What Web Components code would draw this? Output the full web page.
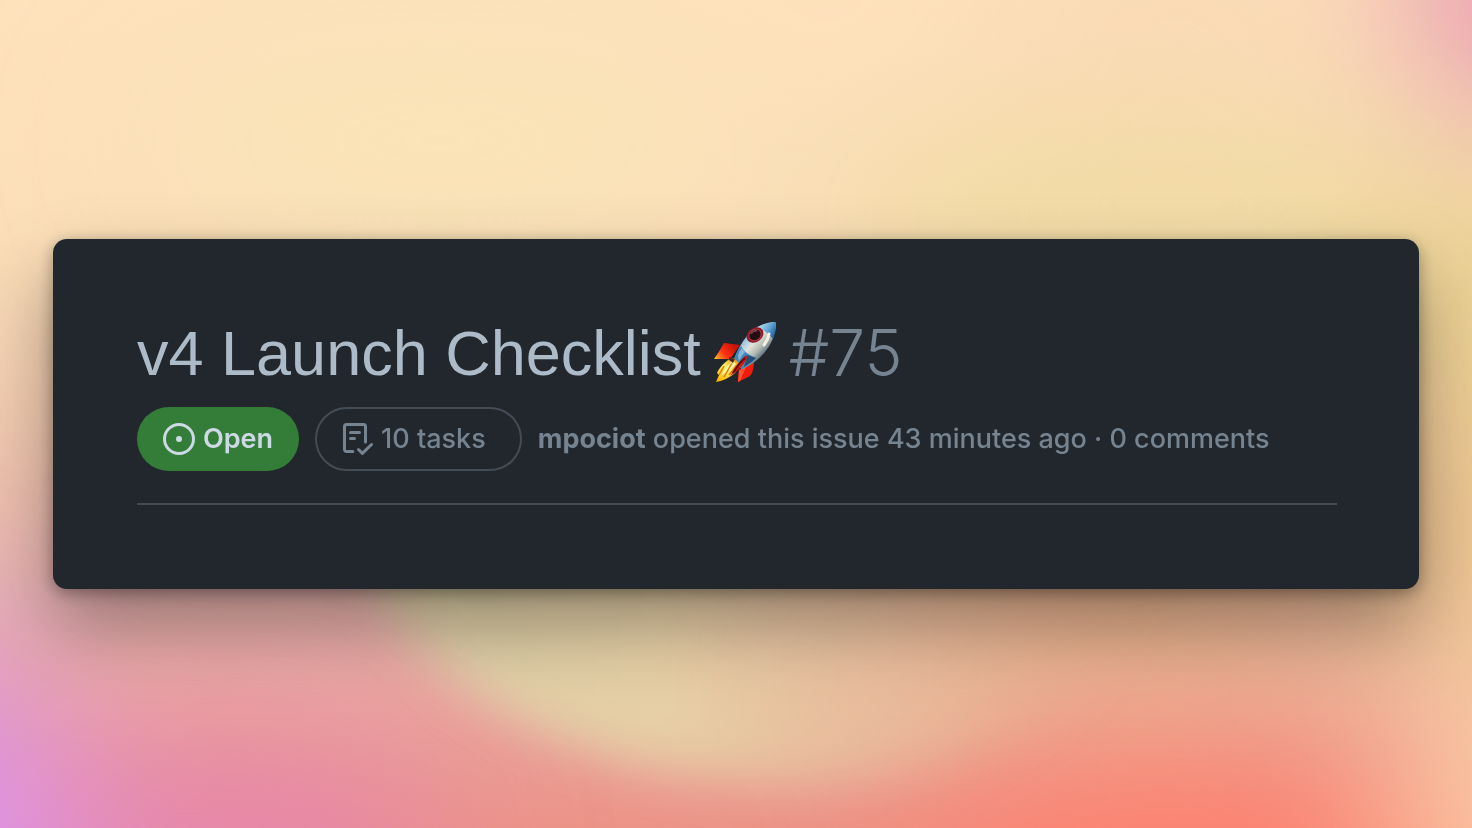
<!DOCTYPE html>
<html lang="en">
<head>
<meta charset="utf-8">
<meta name="viewport" content="width=device-width, initial-scale=1">
<title>v4 Launch Checklist</title>
<style>
    body {
        margin: 0;
        font-family: Inter, "Liberation Sans", sans-serif;
        color: #768390;
    }
</style>
</head>
<body>
<gradient-stage>
    <issue-card>
        <issue-title slot="title" number="#75">v4 Launch Checklist</issue-title>
        <state-badge slot="meta">Open</state-badge>
        <task-counter slot="meta">10 tasks</task-counter>
        <issue-byline slot="meta" author="mpociot">opened this issue 43 minutes ago · 0 comments</issue-byline>
    </issue-card>
</gradient-stage>

<script>
// Full window backdrop, the card goes in the slot
class GradientStage extends HTMLElement {
    constructor() {
        super();
        this.attachShadow({ mode: 'open' });

        this.shadowRoot.innerHTML = `
            <style>
                :host {
                    display: grid;
                    align-items: center;
                    position: relative;
                    min-height: 100vh;
                    box-sizing: border-box;
                    padding: 32px 53px;
                    overflow: hidden;
                }
                .backdrop {
                    position: absolute;
                    inset: 0;
                    width: 100%;
                    height: 100%;
                }
                ::slotted(*) {
                    position: relative;
                }
            </style>
            <svg class="backdrop" viewBox="0 0 1472 828" preserveAspectRatio="none" aria-hidden="true">
                <defs>
                    <linearGradient id="base" x1="0" y1="0" x2="0" y2="1">
                        <stop offset="0" stop-color="#fde2bd"/>
                        <stop offset=".28" stop-color="#fbdfb9"/>
                        <stop offset=".5" stop-color="#f2cbb0"/>
                        <stop offset=".72" stop-color="#e8b3ae"/>
                        <stop offset="1" stop-color="#ec9488"/>
                    </linearGradient>
                    <linearGradient id="pale" x1="0" y1="0" x2="1" y2="0">
                        <stop offset="0" stop-color="#d9cfa6"/>
                        <stop offset=".4" stop-color="#e6cfa6"/>
                        <stop offset=".7" stop-color="#e8be9c" stop-opacity=".7"/>
                        <stop offset="1" stop-color="#eaa98a" stop-opacity="0"/>
                    </linearGradient>
                    <filter id="b24" x="-50%" y="-50%" width="200%" height="200%"><feGaussianBlur stdDeviation="24"/></filter>
                    <filter id="b80" x="-100%" y="-100%" width="300%" height="300%"><feGaussianBlur stdDeviation="80"/></filter>
                </defs>
                <rect width="1472" height="828" fill="url(#base)"/>
                <g filter="url(#b80)">
                    <ellipse cx="440" cy="140" rx="300" ry="90" fill="#fae5b6" opacity=".9"/>
                    <ellipse cx="1160" cy="220" rx="330" ry="110" fill="#eed99f" opacity=".85"/>
                    <ellipse cx="1500" cy="320" rx="130" ry="140" fill="#e9cf8c"/>
                    <ellipse cx="1180" cy="0" rx="200" ry="80" fill="#fad6b4" opacity=".8"/>
                    <ellipse cx="1530" cy="-10" rx="130" ry="130" fill="#e795b0"/>
                    <ellipse cx="1100" cy="580" rx="320" ry="110" fill="#e6b488"/>
                    <ellipse cx="1510" cy="540" rx="120" ry="180" fill="#ecc88e"/>
                    <ellipse cx="1180" cy="890" rx="270" ry="130" fill="#ff7f6e"/>
                    <ellipse cx="1540" cy="800" rx="130" ry="150" fill="#fccfa8"/>
                    <ellipse cx="230" cy="860" rx="210" ry="110" fill="#e585b0"/>
                    <ellipse cx="-60" cy="860" rx="130" ry="220" fill="#dc94ec"/>
                </g>
                <path d="M325 440 H1180 C1180 690 960 792 760 782 C590 772 365 700 325 440Z" fill="url(#pale)" filter="url(#b24)"/>
            </svg>
            <slot></slot>
        `;
    }
}

class IssueCard extends HTMLElement {
    constructor() {
        super();
        this.attachShadow({ mode: 'open' });

        this.shadowRoot.innerHTML = `
            <style>
                :host {
                    display: block;
                    padding: 74px 82px 84px 84px;
                    border-radius: 14px;
                    background: #22272e;
                    box-shadow: 0 4px 16px rgba(0, 0, 0, .35), 0 36px 72px rgba(0, 0, 0, .35);
                }
                header {
                    display: flex;
                    flex-direction: column;
                    gap: 14px;
                    padding-bottom: 32px;
                    border-bottom: 2px solid #444c56;
                }
                .meta {
                    display: flex;
                    flex-wrap: wrap;
                    align-items: center;
                    gap: 16px;
                    font-size: 27px;
                    font-weight: 500;
                    line-height: 40px;
                }
            </style>
            <header>
                <slot name="title"></slot>
                <div class="meta"><slot name="meta"></slot></div>
            </header>
        `;
    }
}

class IssueTitle extends HTMLElement {
    constructor() {
        super();
        this.attachShadow({ mode: 'open' });

        this.shadowRoot.innerHTML = `
            <style>
                :host {
                    display: block;
                }
                h1 {
                    display: flex;
                    flex-wrap: wrap;
                    align-items: center;
                    gap: 12px;
                    margin: 0;
                    font-size: 64px;
                    line-height: 80px;
                    font-weight: 400;
                    color: #adbac7;
                }
                .text {
                    font-family: "Liberation Sans", Arial, sans-serif;
                    font-size: 63px;
                }
                svg {
                    width: 64px;
                    height: 64px;
                }
                .number {
                    font-weight: 300;
                    color: #768390;
                }
            </style>
            <h1>
                <span class="text"><slot></slot></span>
                <svg viewBox="0 0 64 64" role="img" aria-label="rocket">
                    <defs>
                        <linearGradient id="body" x1="22" y1="18" x2="46" y2="40" gradientUnits="userSpaceOnUse">
                            <stop offset="0" stop-color="#2f6fa6"/>
                            <stop offset=".22" stop-color="#8fbfdf"/>
                            <stop offset=".5" stop-color="#dfe3dc"/>
                            <stop offset=".75" stop-color="#b4b9b2"/>
                            <stop offset="1" stop-color="#4d6878"/>
                        </linearGradient>
                        <linearGradient id="nose" x1="46" y1="4" x2="62" y2="14" gradientUnits="userSpaceOnUse">
                            <stop offset="0" stop-color="#b8dcf2"/>
                            <stop offset=".5" stop-color="#67a9d8"/>
                            <stop offset="1" stop-color="#1d5f9c"/>
                        </linearGradient>
                        <linearGradient id="fin" x1="20" y1="24" x2="3" y2="38" gradientUnits="userSpaceOnUse">
                            <stop offset="0" stop-color="#c91408"/>
                            <stop offset=".55" stop-color="#ff3210"/>
                            <stop offset="1" stop-color="#ffb32c"/>
                        </linearGradient>
                        <linearGradient id="flame" x1="20" y1="38" x2="6" y2="60" gradientUnits="userSpaceOnUse">
                            <stop offset="0" stop-color="#e8a020"/>
                            <stop offset=".4" stop-color="#fff06a"/>
                            <stop offset="1" stop-color="#ffb400"/>
                        </linearGradient>
                    </defs>
                    <path d="M11 22 27 24 17 38 1 38Q6 31 11 22Z" fill="url(#fin)"/>
                    <path d="M40 40 41 43Q40 52 37 55L25 61 26 49Z" fill="#f01c0c"/>
                    <path d="M26 49 33 46 27 60 25 61Z" fill="#ff5130"/>
                    <path d="M61 1Q49 2 40 9 29 18 22 36L20 41 29 48Q42 43 52 31 62 19 63 3 63 1 61 1Z" fill="url(#body)"/>
                    <path d="M61 1Q51 2 43 7 52 8 60 18 63 11 63 3 63 1 61 1Z" fill="url(#nose)"/>
                    <path d="M22 36Q24 29 28 25 31 32 43 37 37 44 29 48L20 41Z" fill="#4387b9"/>
                    <path d="M25 35Q26 30 29 27L32 31Q28 35 26 40Z" fill="#83b8dc"/>
                    <path d="M34 34 43 37Q38 42 31 46Z" fill="#244f77"/>
                    <path d="M15 39Q20 35 23 39L27 43 22 52Q14 59 3 61L6 54 4 52Q7 45 15 39Z" fill="url(#flame)"/>
                    <path d="M20 39Q13 46 8 54 16 51 23 43Z" fill="#fff7a5"/>
                    <path d="M19 42 11 56M24 44 16 54M11 45 6 54" stroke="#df7a08" stroke-width="1.5" fill="none"/>
                    <path d="M16 36 22 38 20 42 16 39Z" fill="#4b2820"/>
                    <path d="M33 34Q27 39 17 55 29 48 34 37Z" fill="#d5170e"/>
                    <path d="M32 37Q25 43 20 52" stroke="#6d0b0b" stroke-width="2" fill="none"/>
                    <ellipse cx="42" cy="14" rx="9" ry="7" transform="rotate(-35 42 14)" fill="#8f1420"/>
                    <ellipse cx="42" cy="14" rx="7" ry="6" transform="rotate(-35 42 14)" fill="#a8404c"/>
                    <ellipse cx="42" cy="14" rx="6" ry="5" transform="rotate(-35 42 14)" fill="#260c12"/>
                    <path d="M38 13Q40 9 44 10" stroke="#7c4750" stroke-width="1.5" fill="none"/>
                    <path d="M51 24Q55 19 56 13" stroke="#f3f0e5" stroke-width="3" stroke-linecap="round" fill="none"/>
                </svg>
                <span class="number"></span>
            </h1>
        `;
    }

    connectedCallback() {
        this.shadowRoot.querySelector('.number').textContent = this.getAttribute('number');
    }
}

class StateBadge extends HTMLElement {
    constructor() {
        super();
        this.attachShadow({ mode: 'open' });

        this.shadowRoot.innerHTML = `
            <style>
                :host {
                    display: flex;
                    align-items: center;
                    gap: 8px;
                    box-sizing: border-box;
                    height: 64px;
                    padding: 0 26px;
                    border-radius: 32px;
                    background: #347d39;
                    color: #cdd9e5;
                    font-weight: 600;
                }
                svg {
                    width: 32px;
                    height: 32px;
                    fill: currentColor;
                }
            </style>
            <svg viewBox="0 0 16 16" aria-hidden="true">
                <path d="M8 9.5a1.5 1.5 0 100-3 1.5 1.5 0 000 3z"/>
                <path fill-rule="evenodd" d="M8 0a8 8 0 100 16A8 8 0 008 0zM1.5 8a6.5 6.5 0 1113 0 6.5 6.5 0 01-13 0z"/>
            </svg>
            <span><slot></slot></span>
        `;
    }
}

class TaskCounter extends HTMLElement {
    constructor() {
        super();
        this.attachShadow({ mode: 'open' });

        this.shadowRoot.innerHTML = `
            <style>
                :host {
                    display: flex;
                    align-items: center;
                    gap: 8px;
                    box-sizing: border-box;
                    height: 64px;
                    padding: 0 34px 0 24px;
                    border: 2px solid #444c56;
                    border-radius: 32px;
                }
                svg {
                    width: 32px;
                    height: 32px;
                    fill: currentColor;
                }
            </style>
            <svg viewBox="0 0 16 16" aria-hidden="true">
                <path fill-rule="evenodd" d="M2.5 1.75a.25.25 0 01.25-.25h8.5a.25.25 0 01.25.25v7.736a.75.75 0 101.5 0V1.75A1.75 1.75 0 0011.25 0h-8.5A1.75 1.75 0 001 1.75v11.5c0 .966.784 1.75 1.75 1.75h3.17a.75.75 0 000-1.5H2.75a.25.25 0 01-.25-.25V1.75zM4.75 4a.75.75 0 000 1.5h4.5a.75.75 0 000-1.5h-4.5zM4 7.75A.75.75 0 014.75 7h2a.75.75 0 010 1.5h-2A.75.75 0 014 7.75zm11.774 3.537a.75.75 0 00-1.048-1.074L10.7 14.145 9.281 12.72a.75.75 0 00-1.062 1.058l1.943 1.95a.75.75 0 001.055.008l4.557-4.45z"/>
            </svg>
            <span><slot></slot></span>
        `;
    }
}

class IssueByline extends HTMLElement {
    constructor() {
        super();
        this.attachShadow({ mode: 'open' });

        this.shadowRoot.innerHTML = `
            <style>
                :host {
                    display: block;
                }
                a {
                    color: inherit;
                    font-weight: 700;
                    text-decoration: none;
                }
                a:hover {
                    text-decoration: underline;
                }
            </style>
            <a href="#"></a> <slot></slot>
        `;
    }

    connectedCallback() {
        this.shadowRoot.querySelector('a').textContent = this.getAttribute('author');
    }
}

customElements.define('gradient-stage', GradientStage);
customElements.define('issue-card', IssueCard);
customElements.define('issue-title', IssueTitle);
customElements.define('state-badge', StateBadge);
customElements.define('task-counter', TaskCounter);
customElements.define('issue-byline', IssueByline);
</script>
</body>
</html>
